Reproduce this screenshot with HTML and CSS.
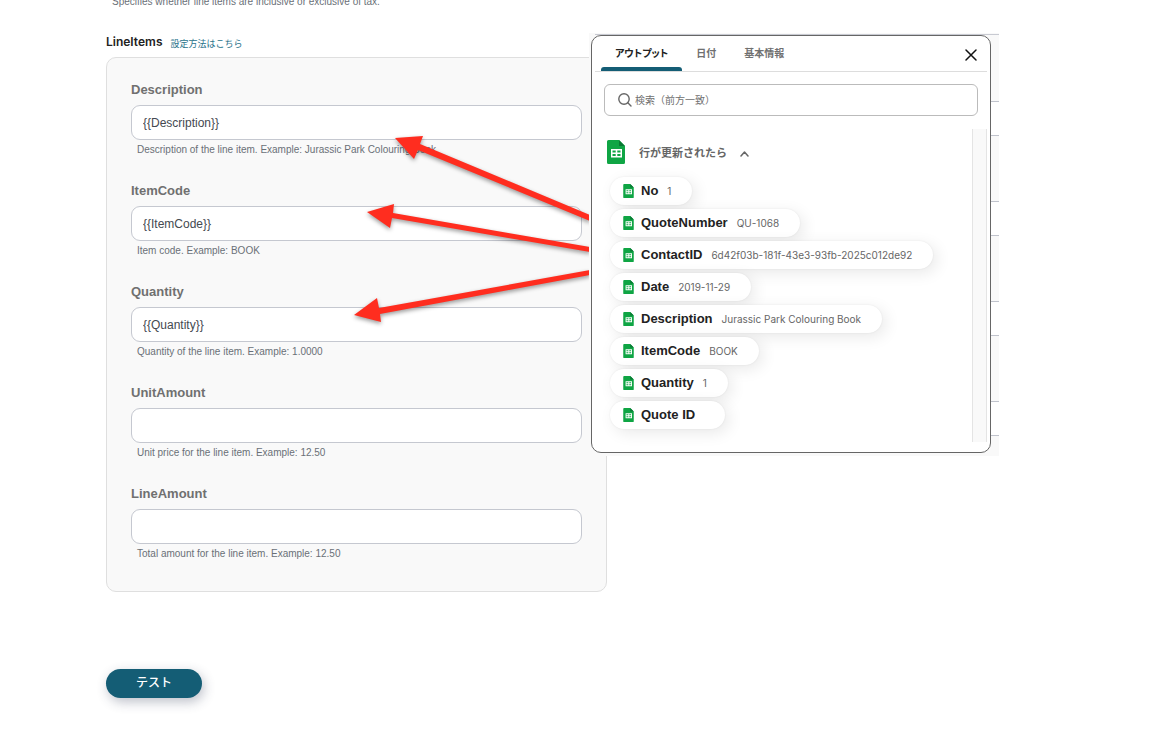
FILE: index.html
```html
<!DOCTYPE html>
<html lang="ja">
<head>
<meta charset="utf-8">
<title>LineItems</title>
<link rel="stylesheet" href="styles.css">
</head>
<body>
<svg class="defs" aria-hidden="true">
  <symbol id="sheet" viewBox="0 0 18 24">
    <path d="M1.500 0H12L18 6V22.500A1.500 1.500 0 0 1 16.500 24H1.500A1.500 1.500 0 0 1 0 22.500V1.500A1.500 1.500 0 0 1 1.500 0Z" fill="#0fa544"/>
    <path d="M12 0L18 6H12Z" fill="#087a33"/>
    <path d="M4 9H15V17.500H4ZM5.500 10.500V12.500H8.700V10.500ZM10.300 10.500V12.500H13.500V10.500ZM5.500 14V16H8.700V14ZM10.300 14V16H13.500V14Z" fill="#fff" fill-rule="evenodd"/>
  </symbol>
</svg>
<main class="page">
  <p class="hint hint-top">Specifies whether line items are inclusive or exclusive of tax.</p>
  <header class="heading">
    <h1 class="title">LineItems</h1>
    <a class="guide" href="#">設定方法はこちら</a>
  </header>
  <form class="card">
    <div class="field">
      <label class="label" for="description">Description</label>
      <input class="input" id="description" type="text" value="{{Description}}">
      <p class="hint">Description of the line item. Example: Jurassic Park Colouring Book</p>
    </div>
    <div class="field">
      <label class="label" for="itemcode">ItemCode</label>
      <input class="input" id="itemcode" type="text" value="{{ItemCode}}">
      <p class="hint">Item code. Example: BOOK</p>
    </div>
    <div class="field">
      <label class="label" for="quantity">Quantity</label>
      <input class="input" id="quantity" type="text" value="{{Quantity}}">
      <p class="hint">Quantity of the line item. Example: 1.0000</p>
    </div>
    <div class="field">
      <label class="label" for="unitamount">UnitAmount</label>
      <input class="input" id="unitamount" type="text">
      <p class="hint">Unit price for the line item. Example: 12.50</p>
    </div>
    <div class="field">
      <label class="label" for="lineamount">LineAmount</label>
      <input class="input" id="lineamount" type="text">
      <p class="hint">Total amount for the line item. Example: 12.50</p>
    </div>
  </form>
  <button class="test" type="button">テスト</button>

  <svg class="arrows" width="240" height="200" viewBox="350 130 240 200" aria-hidden="true">
    <g fill="#ff2d1f">
      <path d="M395 138L423 136L420 144L590 215V221L418 150L414 159Z"/>
      <path d="M367 212L394 204L393 213L590 247V252L392 218L390 228Z"/>
      <path d="M354 315L377 298L379 308L590 270V275L380 314L381 322Z"/>
    </g>
  </svg>

  <aside class="overlay">
    <div class="stripes" aria-hidden="true"><i></i><i></i><i></i><i></i></div>
    <section class="panel">
      <div class="panel-head">
        <div class="tabs" role="tablist">
          <button class="tab tab-active" type="button" role="tab">アウトプット</button>
          <button class="tab" type="button" role="tab">日付</button>
          <button class="tab" type="button" role="tab">基本情報</button>
        </div>
        <button class="close" type="button" aria-label="閉じる">
          <svg width="12" height="12" viewBox="0 0 12 12"><path d="M1 1L11 11M11 1L1 11" stroke="#111" stroke-width="1.500" stroke-linecap="round"/></svg>
        </button>
      </div>
      <label class="search">
        <svg width="14" height="14" viewBox="0 0 14 14" fill="none" stroke="#666" stroke-width="1.400" stroke-linecap="round"><circle cx="6" cy="6" r="5.200"/><path d="M9.800 9.800L13 13"/></svg>
        <input class="search-input" type="text" aria-label="検索" placeholder="検索（前方一致）">
      </label>
      <div class="results">
        <div class="list">
          <button class="group" type="button">
            <svg width="18" height="24"><use href="#sheet"/></svg>
            <span>行が更新されたら</span>
            <svg class="chevron" width="9" height="6" viewBox="0 0 9 6" fill="none" stroke="#666" stroke-width="1.500" stroke-linecap="round" stroke-linejoin="round"><path d="M1 5L4.500 1L8 5"/></svg>
          </button>
          <ul class="chips">
            <li class="chip"><svg width="11" height="14"><use href="#sheet"/></svg><b>No</b><span>1</span></li>
            <li class="chip"><svg width="11" height="14"><use href="#sheet"/></svg><b>QuoteNumber</b><span>QU-1068</span></li>
            <li class="chip"><svg width="11" height="14"><use href="#sheet"/></svg><b>ContactID</b><span>6d42f03b-181f-43e3-93fb-2025c012de92</span></li>
            <li class="chip"><svg width="11" height="14"><use href="#sheet"/></svg><b>Date</b><span>2019-11-29</span></li>
            <li class="chip"><svg width="11" height="14"><use href="#sheet"/></svg><b>Description</b><span>Jurassic Park Colouring Book</span></li>
            <li class="chip"><svg width="11" height="14"><use href="#sheet"/></svg><b>ItemCode</b><span>BOOK</span></li>
            <li class="chip"><svg width="11" height="14"><use href="#sheet"/></svg><b>Quantity</b><span>1</span></li>
            <li class="chip"><svg width="11" height="14"><use href="#sheet"/></svg><b>Quote ID</b><span></span></li>
          </ul>
        </div>
        <div class="track"></div>
      </div>
    </section>
  </aside>
</main>
</body>
</html>
```
FILE: styles.css
```css
* { box-sizing: border-box; }
body {
  margin: 0;
  background: #fff;
  color: #222;
  font-family: "Liberation Sans", "Noto Sans CJK JP", sans-serif;
}
p, h1, ul { margin: 0; padding: 0; }
button, input { font-family: inherit; }
button { border: 0; background: none; padding: 0; cursor: pointer; }
.defs { position: absolute; width: 0; height: 0; }

.page {
  position: relative;
  display: flex;
  flex-direction: column;
  align-items: flex-start;
  margin-left: 106px;
  padding-bottom: 32px;
  max-width: 893px;
}
.hint {
  padding-left: 6px;
  color: #6a7077;
  font-size: 10px;
  line-height: 12px;
}
.hint-top { margin-top: -4px; }
.heading {
  display: flex;
  align-items: center;
  gap: 8px;
  height: 20px;
  margin: 24px 0 5px;
}
.title { font: 600 12px/20px Inter, sans-serif; }
.guide { padding-top: 4px; color: #28728a; font-size: 9px; line-height: 16px; text-decoration: none; }

.card {
  display: grid;
  gap: 27px;
  width: 100%;
  max-width: 501px;
  padding: 24px 24px 31px;
  border: 1px solid #dfdfdf;
  border-radius: 10px;
  background: #f9f9f9;
}
.field { display: flex; flex-direction: column; }
.label {
  margin-bottom: 7px;
  color: #707070;
  font-size: 13px;
  font-weight: 700;
  line-height: 16px;
}
.input {
  width: 100%;
  height: 35px;
  margin-bottom: 4px;
  padding: 0 11px;
  border: 1px solid #c5c8d0;
  border-radius: 9px;
  background: #fff;
  color: #444950;
  font-size: 12px;
}
.test {
  margin-top: 77px;
  width: 96px;
  height: 29px;
  padding-bottom: 4px;
  border-radius: 15px;
  background: #145d75;
  box-shadow: 2px 4px 12px rgba(40, 50, 80, .3);
  color: #fff;
  font-size: 12px;
  font-weight: 500;
}

.arrows {
  position: absolute;
  left: 244px;
  top: 130px;
  filter: drop-shadow(0 2px 2px rgba(0, 0, 0, .4));
}

.overlay {
  position: absolute;
  left: 483px;
  top: 33px;
  width: 410px;
  padding: 2px 8px 3px 2px;
  background: #f9f9f9;
}
.stripes {
  position: absolute;
  inset: 1px 0 0 6px;
  display: grid;
  align-content: start;
  gap: 65px;
  padding-top: 66px;
  border-top: 1px solid #c8cad2;
}
.stripes i { height: 35px; border: solid #c0c3cc; border-width: 1px 0; background: #fff; }
.panel {
  position: relative;
  display: flex;
  flex-direction: column;
  padding: 0 3px 10px;
  border: 1px solid #666;
  border-radius: 10px;
  background: #fff;
}
.panel-head {
  display: flex;
  align-items: center;
  justify-content: space-between;
  height: 36px;
  padding: 0 10px 0 6px;
  border-bottom: 1px solid #ddd;
}
.tabs { display: flex; align-self: stretch; }
.tab {
  padding: 2px 14px 0;
  border-bottom: 4px solid transparent;
  color: #707070;
  font-size: 10px;
  font-weight: 700;
  font-feature-settings: "palt";
}
.tab-active { position: relative; color: #222; }
.tab-active::after {
  content: "";
  position: absolute;
  left: 0;
  right: 0;
  bottom: -4px;
  height: 4px;
  border-radius: 3px 3px 0 0;
  background: #145d75;
}
.close { display: flex; padding-top: 3px; }
.search {
  display: flex;
  align-items: center;
  gap: 3px;
  height: 32px;
  margin: 12px 9px 13px;
  padding: 0 13px;
  border: 1px solid #bbb;
  border-radius: 6px;
}
.search-input { flex: 1; min-width: 0; padding: 0; border: 0; outline: 0; font-size: 10px; }
.search-input::placeholder { color: #707070; }
.results { display: flex; }
.list { flex: 1; padding: 10px 0 13px 12px; }
.group {
  display: flex;
  align-items: center;
  gap: 14px;
  height: 26px;
  margin-bottom: 12px;
  color: #666;
  font-size: 11px;
  font-weight: 700;
}
.chevron { margin: 3px 0 0 -1px; }
.chips { display: flex; flex-direction: column; align-items: flex-start; gap: 4px; padding-left: 3px; list-style: none; }
.chip {
  display: flex;
  align-items: center;
  height: 28px;
  padding: 0 21px 0 13px;
  border-radius: 14px;
  background: #fff;
  box-shadow: 0 0 2px rgba(0, 0, 0, .08), 4px 4px 16px rgba(0, 0, 0, .09);
}
.chip b { margin: 0 9px 0 7px; color: #222; font-size: 13px; line-height: 16px; }
.chip span { color: #666; font: 10px/16px Inter, sans-serif; }
.track { width: 15px; border: solid #e4e4e4; border-width: 0 1px; background: #f9f9f9; }
```
